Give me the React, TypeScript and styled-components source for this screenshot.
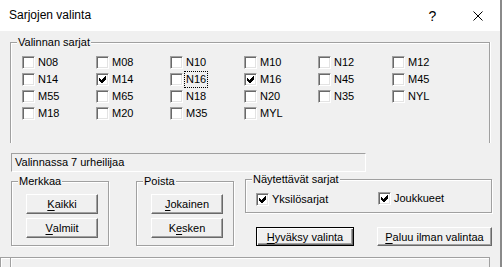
import React from 'react';
import styled, { createGlobalStyle } from 'styled-components';

const GlobalStyle = createGlobalStyle`
  html, body {
    margin: 0;
    padding: 0;
    background: #f0f0f0;
  }
  body {
    font-family: 'Liberation Sans', Arial, sans-serif;
    font-size: 11px;
    color: #000;
  }
`;

const series = [
  'N08', 'M08', 'N10', 'M10', 'N12', 'M12',
  'N14', 'M14', 'N16', 'M16', 'N45', 'M45',
  'M55', 'M65', 'N18', 'N20', 'N35', 'NYL',
  'M18', 'M20', 'M35', 'MYL',
];
const checkedSeries = ['M14', 'M16'];
const focusedSeries = 'N16';

function CheckMark() {
  return (
    <svg width="13" height="13" viewBox="0 0 13 13">
      <polygon points="3,5 5,7 9,3 10,3 10,6 6,10 5,10 3,8" fill="#000" shapeRendering="crispEdges" />
    </svg>
  );
}

interface CheckProps {
  label: string;
  checked?: boolean;
  focused?: boolean;
}

function Check({ label, checked, focused }: CheckProps) {
  return (
    <CheckRow>
      <Box>{checked && <CheckMark />}</Box>
      <CheckLabel focused={focused}>{label}</CheckLabel>
    </CheckRow>
  );
}

interface ButtonProps {
  hotkey: string;
  before?: string;
  after: string;
  width: number;
  height?: number;
  isDefault?: boolean;
}

function DlgButton({ hotkey, before = '', after, width, height = 20, isDefault }: ButtonProps) {
  return (
    <Button width={width} height={height} isDefault={isDefault}>
      {before}
      <u>{hotkey}</u>
      {after}
    </Button>
  );
}

export default function App() {
  return (
    <>
      <GlobalStyle />
      <Window>
        <TitleBar>
          <Title>Sarjojen valinta</Title>
          <TitleButtons>
            <TitleButton>?</TitleButton>
            <TitleButton>
              <svg width="10" height="10" viewBox="0 0 10 10">
                <path d="M0.5 0.5 L9.5 9.5 M9.5 0.5 L0.5 9.5" stroke="#000" strokeWidth="1" />
              </svg>
            </TitleButton>
          </TitleButtons>
        </TitleBar>
        <Body>
          <SeriesGroup>
            <Legend>Valinnan sarjat</Legend>
            <SeriesGrid>
              {series.map((s) => (
                <Check key={s} label={s} checked={checkedSeries.includes(s)} focused={s === focusedSeries} />
              ))}
            </SeriesGrid>
          </SeriesGroup>

          <Status>Valinnassa 7 urheilijaa</Status>

          <BottomRow>
            <SmallGroup>
              <Legend>Merkkaa</Legend>
              <ButtonStack>
                <DlgButton hotkey="K" after="aikki" width={72} />
                <DlgButton hotkey="V" after="almiit" width={72} />
              </ButtonStack>
            </SmallGroup>
            <SmallGroup gapLeft={27}>
              <Legend>Poista</Legend>
              <ButtonStack>
                <DlgButton hotkey="J" after="okainen" width={72} />
                <DlgButton before="K" hotkey="e" after="sken" width={72} />
              </ButtonStack>
            </SmallGroup>
            <RightColumn>
              <ShowGroup>
                <Legend>Näytettävät sarjat</Legend>
                <ShowRow>
                  <ShowCell>
                    <Check label="Yksilösarjat" checked />
                  </ShowCell>
                  <Check label="Joukkueet" checked />
                </ShowRow>
              </ShowGroup>
              <ActionRow>
                <DlgButton hotkey="H" after="yväksy valinta" width={98} height={19} isDefault />
                <DlgButton hotkey="P" after="aluu ilman valintaa" width={115} height={19} />
              </ActionRow>
            </RightColumn>
          </BottomRow>

          <NextStrip>
            <NextGroup />
          </NextStrip>
        </Body>
      </Window>
    </>
  );
}

const Window = styled.div`
  width: 502px;
  height: 267px;
  box-sizing: border-box;
  overflow: hidden;
  display: flex;
  flex-direction: column;
  border-right: 2px solid #8a8a8a;
  background: #f0f0f0;
`;

const TitleBar = styled.div`
  height: 31px;
  flex: none;
  display: flex;
  align-items: center;
  background: #fff;
  padding-left: 9px;
`;

const Title = styled.span`
  font-size: 12px;
  color: #000;
  padding-bottom: 1px;
`;

const TitleButtons = styled.div`
  margin-left: auto;
  display: flex;
  height: 100%;
`;

const TitleButton = styled.div`
  width: 45px;
  display: flex;
  align-items: center;
  justify-content: center;
  font-size: 14px;
  color: #000;
`;

const Body = styled.div`
  display: flex;
  flex-direction: column;
  padding-left: 10px;
`;

const Legend = styled.legend`
  padding: 0 1px;
  margin-left: 6px;
  line-height: 13px;
  background: #f0f0f0;
  position: relative;
`;

const GroupBase = styled.fieldset`
  margin: 0;
  padding: 0;
  min-inline-size: 0;
  box-sizing: border-box;
  border: 1px solid #a0a0a0;
  box-shadow: inset 1px 1px 0 #fff, 1px 1px 0 #fff;
`;

const SeriesGroup = styled(GroupBase)`
  width: 480px;
  margin-top: 5px;
  border-bottom: none;
  box-shadow: inset 1px 1px 0 #fff, 1px 0 0 #fff;
`;

const SeriesGrid = styled.div`
  display: grid;
  grid-template-columns: repeat(6, 74px);
  grid-auto-rows: 17px;
  padding: 5px 0 21px 11px;
`;

const CheckRow = styled.div`
  display: flex;
  align-items: center;
  gap: 3px;
`;

const Box = styled.span`
  width: 13px;
  height: 13px;
  flex: none;
  box-sizing: border-box;
  background: #fff;
  border: 1px solid;
  border-color: #a0a0a0 #fff #fff #a0a0a0;
  box-shadow: inset 1px 1px 0 #696969, inset -1px -1px 0 #e3e3e3;
  position: relative;

  svg {
    position: absolute;
    left: -1px;
    top: -1px;
  }
`;

const CheckLabel = styled.span<{ focused?: boolean }>`
  line-height: 15px;
  padding: 0 1px;
  margin-left: -1px;
  outline: ${({ focused }) => (focused ? '1px dotted #000' : 'none')};
`;

const Status = styled.div`
  width: 355px;
  height: 19px;
  box-sizing: border-box;
  margin: 10px 0 0 1px;
  border: 1px solid;
  border-color: #a0a0a0 #fff #fff #a0a0a0;
  padding-left: 3px;
  line-height: 17px;
`;

const BottomRow = styled.div`
  display: flex;
  align-items: flex-start;
  margin-top: 3px;
  height: 72px;
`;

const SmallGroup = styled(GroupBase)<{ gapLeft?: number }>`
  width: 98px;
  margin-left: ${({ gapLeft }) => gapLeft ?? 1}px;
`;

const ButtonStack = styled.div`
  display: flex;
  flex-direction: column;
  gap: 4px;
  padding: 6px 0 7px 14px;
`;

const Button = styled.div<{ width: number; height: number; isDefault?: boolean }>`
  width: ${({ width }) => width}px;
  height: ${({ height }) => height}px;
  box-sizing: border-box;
  display: flex;
  align-items: center;
  justify-content: center;
  background: #f0f0f0;
  white-space: nowrap;
  ${({ isDefault }) =>
    isDefault
      ? `
    border: 1px solid #000;
    box-shadow: inset 1px 1px 0 #fff, inset -1px -1px 0 #696969, inset -2px -2px 0 #a0a0a0;
  `
      : `
    border: 1px solid;
    border-color: #fff #696969 #696969 #fff;
    box-shadow: inset -1px -1px 0 #a0a0a0;
  `}

  u {
    text-decoration: underline;
    text-underline-offset: 2px;
  }
`;

const RightColumn = styled.div`
  display: flex;
  flex-direction: column;
  margin-left: 11px;
  margin-top: -2px;
`;

const ShowGroup = styled(GroupBase)`
  width: 247px;
`;

const ShowRow = styled.div`
  display: flex;
  padding: 6px 0 7px 10px;
  height: 13px;
  box-sizing: content-box;
`;

const ShowCell = styled.div`
  width: 122px;
`;

const ActionRow = styled.div`
  display: flex;
  gap: 23px;
  padding-left: 11px;
  margin-top: 14px;
`;

const NextStrip = styled.div`
  margin: 10px 0 0 -10px;
  width: 490px;
  height: 10px;
  box-sizing: border-box;
  border-top: 1px solid #a0a0a0;
  border-left: 1px solid #a0a0a0;
  box-shadow: inset 1px 1px 0 #fff;
  display: flex;
`;

const NextGroup = styled.div`
  margin-left: 9px;
  flex: 1;
  border-left: 1px solid #a0a0a0;
  border-right: 1px solid #a0a0a0;
  box-shadow: inset 1px 0 0 #fff;
`;
